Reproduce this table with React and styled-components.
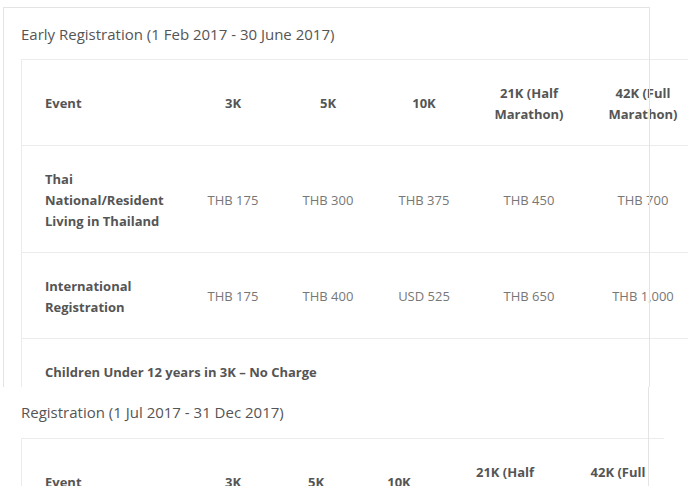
import React from 'react';
import styled, { createGlobalStyle } from 'styled-components';

const GlobalStyle = createGlobalStyle`
  html, body {
    margin: 0;
    padding: 0;
    background: #ffffff;
  }
  body {
    font-family: 'Open Sans', 'Noto Sans', sans-serif;
    -webkit-font-smoothing: antialiased;
  }
`;

const Page = styled.div`
  width: 692px;
  height: 486px;
  overflow: hidden;
  background: #ffffff;
`;

// each shot is a cropped piece of the original page
const Shot = styled.div`
  height: ${({ $height }) => $height}px;
  width: ${({ $width }) => $width}px;
  overflow: hidden;
  padding-left: ${({ $left }) => $left}px;
  padding-top: ${({ $top }) => $top}px;
  box-sizing: border-box;
`;

const Card = styled.div`
  position: relative;
  width: ${({ $width }) => $width}px;
  box-sizing: border-box;
  padding: ${({ $pad }) => $pad};
  min-height: 600px;

  &::after {
    content: '';
    position: absolute;
    inset: 0;
    pointer-events: none;
    border-top: ${({ $edges }) => ($edges.includes('t') ? '1px solid #e4e4e4' : 'none')};
    border-left: ${({ $edges }) => ($edges.includes('l') ? '1px solid #e4e4e4' : 'none')};
    border-right: ${({ $edges }) => ($edges.includes('r') ? '1px solid #e4e4e4' : 'none')};
  }
`;

const Heading = styled.h3`
  margin: 0 0 ${({ $gap }) => $gap}px;
  font-size: 15px;
  line-height: 22px;
  font-weight: 400;
  color: #555555;
  white-space: nowrap;
`;

const Table = styled.table`
  table-layout: fixed;
  width: ${({ $width }) => $width}px;
  border-collapse: collapse;
  border-top: 1px solid #ececec;
  border-left: 1px solid #ececec;
  font-size: 13px;
  line-height: 21px;
`;

const Cell = styled.td`
  padding: 22.5px 15px 20.5px;
  padding-left: ${({ $first }) => ($first ? '23px' : '16px')};
  border-bottom: 1px solid #ececec;
  vertical-align: middle;
  text-align: ${({ $first }) => ($first ? 'left' : 'center')};
  font-weight: ${({ $bold }) => ($bold ? 700 : 400)};
  color: ${({ $bold }) => ($bold ? '#555555' : '#777777')};
`;

const headers = ['Event', '3K', '5K', '10K', '21K (Half Marathon)', '42K (Full Marathon)'];

const earlyRows = [
  ['Thai National/Resident Living in Thailand', 'THB 175', 'THB 300', 'THB 375', 'THB 450', 'THB 700'],
  ['International Registration', 'THB 175', 'THB 400', 'USD 525', 'THB 650', 'THB 1,000'],
];

const PriceTable = ({ widths, rows, note }) => (
  <Table $width={widths.reduce((a, b) => a + b, 0)}>
    <colgroup>
      {widths.map((w, i) => (
        <col key={i} style={{ width: w }} />
      ))}
    </colgroup>
    <tbody>
      <tr>
        {headers.map((h, i) => (
          <Cell key={h} $bold $first={i === 0}>
            {h}
          </Cell>
        ))}
      </tr>
      {rows.map((row) => (
        <tr key={row[0]}>
          {row.map((c, i) => (
            <Cell key={i} $bold={i === 0} $first={i === 0}>
              {c}
            </Cell>
          ))}
        </tr>
      ))}
      {note && (
        <tr>
          <Cell colSpan={6} $bold $first>
            {note}
          </Cell>
        </tr>
      )}
    </tbody>
  </Table>
);

const App = () => (
  <Page>
    <GlobalStyle />
    <Shot $height={387} $width={688} $left={3} $top={7}>
      <Card $width={647} $edges="tlr" $pad="16px 0 0 18px">
        <Heading $gap={14}>Early Registration (1 Feb 2017 - 30 June 2017)</Heading>
        <PriceTable
          widths={[164, 94, 96, 96, 114, 114]}
          rows={earlyRows}
          note="Children Under 12 years in 3K – No Charge"
        />
      </Card>
    </Shot>
    <Shot $height={99} $width={664} $left={0} $top={0}>
      <Card $width={649} $edges="r" $pad="14px 0 0 21px">
        <Heading $gap={15}>Registration (1 Jul 2017 - 31 Dec 2017)</Heading>
        <PriceTable widths={[169, 84, 82, 84, 128, 98]} rows={[]} />
      </Card>
    </Shot>
  </Page>
);

export default App;
